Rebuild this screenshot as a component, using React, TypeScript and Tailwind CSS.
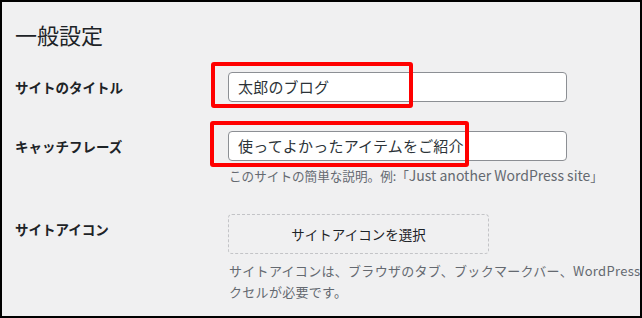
const jp = { fontFamily: '"Noto Sans CJK JP", "Noto Sans", sans-serif' }

function Field({ value }: { value: string }) {
  return (
    <div className="flex h-[30px] w-[339px] items-center rounded-[4px] border border-[#8c8f94] bg-white pl-[9px] text-[15px] tracking-[0.2px] text-[#2c3338]">
      {value}
    </div>
  )
}

export default function App() {
  return (
    <div
      style={jp}
      className="relative h-[318px] w-[642px] overflow-hidden border-2 border-black bg-[#f0f0f1] text-[#1d2327]"
    >
      <div className="pl-[13px] pt-[18px]">
        <h1 className="text-[22px] leading-[28px] font-normal">一般設定</h1>

        <div className="mt-[24px] flex items-start">
          <div className="w-[213px] pt-[6px] text-[13.5px] leading-[18px] font-bold">サイトのタイトル</div>
          <Field value="太郎のブログ" />
        </div>

        <div className="mt-[29px] flex items-start">
          <div className="w-[213px] pt-[6px] text-[13.5px] leading-[18px] font-bold">キャッチフレーズ</div>
          <div className="flex flex-col">
            <Field value="使ってよかったアイテムをご紹介" />
            <p className="mt-[4px] pl-[1px] text-[12.6px] leading-[20px] text-[#646970]">
              このサイトの簡単な説明。例:「<span className="text-[14px]">Just another WordPress site</span>」
            </p>
          </div>
        </div>

        <div className="mt-[28px] flex items-start">
          <div className="w-[213px] pt-[6px] text-[13.5px] leading-[18px] font-bold">サイトアイコン</div>
          <div className="flex min-w-0 flex-1 flex-col">
            <div className="flex h-[40px] w-[261px] items-center justify-center rounded-[4px] border border-dashed border-[#c3c4c7] text-[13.5px]">
              サイトアイコンを選択
            </div>
            <p className="mt-[6px] pl-[1px] whitespace-nowrap text-[13px] tracking-[0.3px] leading-[21px] text-[#646970]">
              サイトアイコンは、ブラウザのタブ、ブックマークバー、WordPress モバイルアプリで表示されます。512 × 512 ピ
              <br />
              クセルが必要です。
            </p>
          </div>
        </div>
      </div>

      <div className="pointer-events-none absolute left-[209px] top-[60px] h-[46px] w-[202px] rounded-[3px] border-4 border-[#ff0000]" />
      <div className="pointer-events-none absolute left-[208px] top-[119px] h-[46px] w-[259px] rounded-[3px] border-4 border-[#ff0000]" />
    </div>
  )
}
